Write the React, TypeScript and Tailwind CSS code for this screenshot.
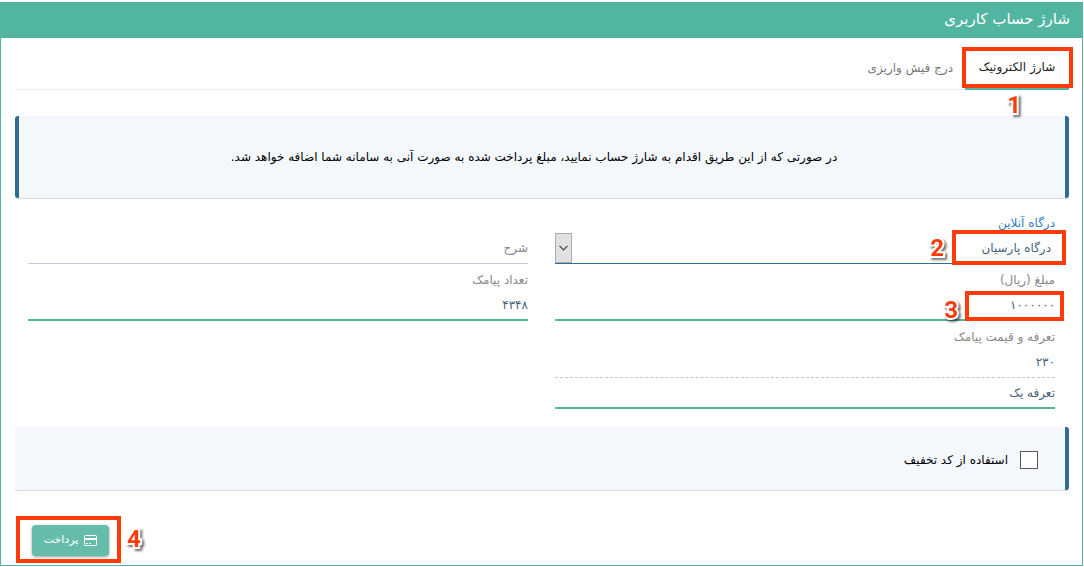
import type { ReactNode } from "react";

type MarkerProps = {
  step: string;
  frame: string;
  label: string;
};

// Highlight frame and step number laid over a control
const Marker = ({ step, frame, label }: MarkerProps) => (
  <>
    <span className={`pointer-events-none absolute border-4 border-[#ff3b0a] ${frame}`} />
    <span
      className={`pointer-events-none absolute font-['Roboto',sans-serif] text-2xl leading-6 font-bold text-[#ff3b0a] [paint-order:stroke_fill] [-webkit-text-stroke:4px_white] drop-shadow-[2px_2px_1px_rgba(0,0,0,0.55)] ${label}`}
    >
      {step}
    </span>
  </>
);

const CardIcon = () => (
  <svg className="h-[11px] w-[13px]" viewBox="0 0 13 11" fill="none" stroke="currentColor" aria-hidden="true">
    <rect x="0.5" y="0.5" width="12" height="10" rx="0.8" />
    <path d="M0.5 4H12.5" strokeWidth="2" />
    <path d="M2 8.5H4M5 8.5H7" />
  </svg>
);

const Panel = ({ className, children }: { className: string; children: ReactNode }) => (
  <div className={`rounded-[3px] border-r-4 border-[#2f6d91] bg-[#f4f8fd] shadow-[0_1px_1px_rgba(0,0,0,0.15)] ${className}`}>
    {children}
  </div>
);

const inputClass = "block w-full bg-transparent text-[#47637e] outline-none";
const labelClass = "block h-5 text-xs leading-5";

export default function App() {
  return (
    <main
      dir="rtl"
      className="mt-0.5 mr-px border border-[#52b5a2] bg-white font-['DejaVu_Sans',sans-serif] text-xs text-black"
    >
      <h1 className="h-[35px] bg-[#52b5a2] px-3 text-[15px] leading-8 text-white">شارژ حساب کاربری</h1>

      <div className="pr-[13px] pl-3.5">
        <div className="mt-2 flex h-11 border-b border-[#eeeeee]">
          <div className="relative">
            <button type="button" className="h-11 w-[104px] border-b-2 border-[#52b5a2] text-[#222222]">
              شارژ الکترونیک
            </button>
            <Marker step="1" frame="top-px -right-1 h-[41px] w-[111px]" label="top-[47px] right-12" />
          </div>
          <button type="button" className="px-3 text-[#777777]">
            درج فیش واریزی
          </button>
        </div>

        <Panel className="mt-[26px] flex h-[82px] items-center justify-center border-l-4 pr-4">
          <p>در صورتی که از این طریق اقدام به شارژ حساب نمایید، مبلغ پرداخت شده به صورت آنی به سامانه شما اضافه خواهد شد.</p>
        </Panel>

        <form className="pr-3.5 pl-[13px]">
          <div className="grid grid-cols-2 gap-x-[27px] pt-[15px]">
            <div>
              <label htmlFor="gateway" className={`${labelClass} text-[#2d7cc4]`}>
                درگاه آنلاین
              </label>
              <div className="relative border-b border-[#2f6d91]">
                <select id="gateway" className={`${inputClass} h-[30px] appearance-none pr-1`}>
                  <option>درگاه پارسیان</option>
                </select>
                <span className="pointer-events-none absolute top-0 left-0 flex h-[30px] w-[17px] items-center justify-center border border-[#adadad] bg-[#e1e1e1]">
                  <svg className="h-[6px] w-[9px]" viewBox="0 0 9 6" fill="none" stroke="#444444" aria-hidden="true">
                    <path d="M0.5 0.8L4.5 4.8L8.5 0.8" strokeWidth="1.2" />
                  </svg>
                </span>
                <Marker step="2" frame="-top-[3px] -right-[11px] h-[35px] w-[114px]" label="top-[3px] right-[111px]" />
              </div>
            </div>
            <div className="pt-5">
              <input
                aria-label="شرح"
                placeholder="شرح"
                className="block h-[31px] w-full border-b border-[#c0cad8] bg-transparent outline-none placeholder:text-[#888888]"
              />
            </div>

            <div className="pt-1.5">
              <label htmlFor="amount" className={`${labelClass} text-[#888888]`}>
                مبلغ (ریال)
              </label>
              <div className="relative border-b-2 border-[#52b5a2]">
                <input id="amount" defaultValue="۱۰۰۰۰۰۰" className={`${inputClass} h-[29px]`} />
                <Marker step="3" frame="top-px -right-[9px] h-[30px] w-[99px]" label="top-2 right-[97px]" />
              </div>
            </div>
            <div className="pt-1.5">
              <label htmlFor="count" className={`${labelClass} text-[#888888]`}>
                تعداد پیامک
              </label>
              <input id="count" defaultValue="۴۳۴۸" className={`${inputClass} h-[31px] border-b-2 border-[#52b5a2]`} />
            </div>

            <div className="pt-1.5">
              <label htmlFor="tariff" className={`${labelClass} text-[#888888]`}>
                تعرفه و قیمت پیامک
              </label>
              <input
                id="tariff"
                readOnly
                defaultValue="۲۳۰"
                className={`${inputClass} h-[31px] border-b border-dashed border-[#c0c4d0]`}
              />
              <input
                aria-label="تعرفه"
                readOnly
                defaultValue="تعرفه یک"
                className={`${inputClass} h-[31px] border-b-2 border-[#52b5a2]`}
              />
            </div>
          </div>
        </form>

        <Panel className="mt-[18px] flex h-[63px] items-center">
          <label className="flex items-center gap-3 pt-0.5 pr-[27px]">
            <input type="checkbox" className="h-[18px] w-[18px] appearance-none border border-[#555555] bg-white" />
            استفاده از کد تخفیف
          </label>
        </Panel>

        <div className="flex justify-end pt-[35px] pb-[9px] pl-[17px]">
          <div className="relative">
            <button
              type="button"
              className="flex h-[31px] w-[77px] items-center justify-center gap-1.5 rounded-sm bg-[#66bcab] text-[11px] text-white shadow-[0_1px_3px_rgba(0,0,0,0.4)]"
            >
              <CardIcon />
              پرداخت
            </button>
            <Marker step="4" frame="-top-[9px] -left-4 h-[47px] w-[105px]" label="top-0.5 left-[95px]" />
          </div>
        </div>
      </div>
    </main>
  );
}
